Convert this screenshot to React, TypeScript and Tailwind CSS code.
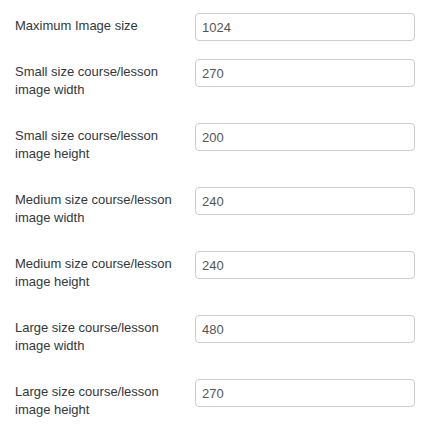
const fields = [
  { label: "Maximum Image size", value: "1024" },
  { label: "Small size course/lesson image width", value: "270" },
  { label: "Small size course/lesson image height", value: "200" },
  { label: "Medium size course/lesson image width", value: "240" },
  { label: "Medium size course/lesson image height", value: "240" },
  { label: "Large size course/lesson image width", value: "480" },
  { label: "Large size course/lesson image height", value: "270" },
];

function App() {
  return (
    <div
      className="bg-white min-h-[432px] pt-[13px] pl-[15px] text-[13px] leading-[18px] text-[#32373c]"
      style={{ fontFamily: '"Liberation Sans", Arial, sans-serif' }}
    >
      <div className="flex flex-col gap-[18px]">
        {fields.map((f) => (
          <div key={f.label} className="flex items-start">
            <label className="w-[180px] shrink-0 pt-[4px] pb-[6px] pr-[10px]">
              {f.label}
            </label>
            <input
              type="text"
              defaultValue={f.value}
              className="w-[220px] h-[28px] px-[6px] border border-[#ccc] rounded-[4px] text-[13px] text-[#555] bg-white outline-none"
            />
          </div>
        ))}
      </div>
    </div>
  );
}

export default App;
